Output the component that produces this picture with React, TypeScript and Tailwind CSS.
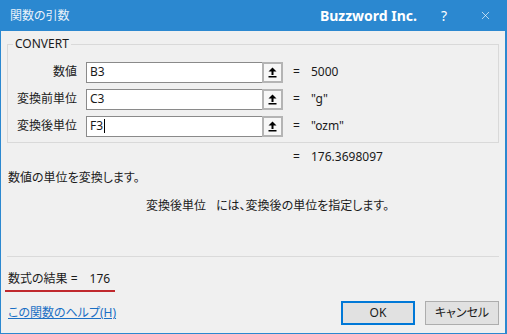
import { X } from "lucide-react";

// ── 参照ボタンの矢印 ─────────────────────────────────────────────
function RefArrow() {
  return (
    <svg width="9" height="11" viewBox="0 0 9 11">
      <path d="M4.5 0.5 L8.5 4.5 L5.5 4.5 L5.5 8 L3.5 8 L3.5 4.5 L0.5 4.5 Z" fill="#000" />
      <rect x="0.5" y="9" width="8" height="1.5" fill="#000" />
    </svg>
  );
}

const ARGS = [
  { label: "数値", value: "B3", result: "5000", caret: false },
  { label: "変換前単位", value: "C3", result: '"g"', caret: false },
  { label: "変換後単位", value: "F3", result: '"ozm"', caret: true },
];

export default function App() {
  return (
    <div className="w-[507px] h-[334px] bg-[#2b88d0] pl-[1px] pr-[2px] pb-[1px] flex flex-col text-[12px] text-[#1a1a1a] font-['Noto_Sans','Noto_Sans_CJK_JP',sans-serif] [font-feature-settings:'palt']">
      {/* ── タイトルバー ── */}
      <div className="h-[31px] flex items-center pl-[9px] pr-[13px] text-white shrink-0">
        <span className="text-[12px] text-[#eaf3fb]">関数の引数</span>
        <span className="ml-auto text-[14px] font-bold">Buzzword Inc.</span>
        <span className="ml-[20px] text-[14px] w-[14px] text-center">?</span>
        <X size={13} strokeWidth={1.2} className="ml-[28px]" />
      </div>

      {/* ── 本体 ── */}
      <div className="flex-1 bg-[#f0f0f0] px-[6px] flex flex-col">
        <fieldset className="mt-[6px] h-[106px] border border-[#d9d9d9] pl-[1px] pr-[6px]">
          <legend className="ml-[4px] px-[2px] leading-[14px] text-[12px]">CONVERT</legend>
          <div className="mt-[11px] flex flex-col gap-[7px]">
            {ARGS.map((a) => (
              <div key={a.label} className="flex items-center h-[20px]">
                <div className="w-[68px] text-right">{a.label}</div>
                <div className="ml-[9px] w-[177px] h-[21px] bg-white border border-[#8a8a8a] flex items-center pl-[3px]">
                  {a.value}
                  {a.caret && <span className="inline-block w-px h-[14px] bg-black ml-[1px]" />}
                </div>
                <div className="w-[21px] h-[21px] border-2 border-[#b4b4b4] bg-[#f7f7f7] flex items-center justify-center -ml-px">
                  <RefArrow />
                </div>
                <div className="ml-[10px] w-[18px]">=</div>
                <div>{a.result}</div>
              </div>
            ))}
          </div>
        </fieldset>

        <div className="mt-[5px] h-[17px] flex pl-[286px]">
          <span className="w-[18px]">=</span>
          <span>176.3698097</span>
        </div>
        <div className="mt-[4px] pl-[1px]">数値の単位を変換します。</div>
        <div className="mt-[10px] pl-[139px]">
          変換後単位<span className="ml-[10px]">には、変換後の単位を指定します。</span>
        </div>

        <div className="mt-[41px] h-px bg-[#dadada]" />

        <div className="mt-[13px] pl-[1px] flex">
          <div className="border-b-2 border-[#c0282d] pr-[5px] pb-[2px] -ml-[3px] pl-[3px]">
            数式の結果 =<span className="ml-[12px]">176</span>
          </div>
        </div>

        <div className="mt-[9px] flex items-center">
          <span className="text-[#1a6fc4] underline pl-[1px]">この関数のヘルプ(H)</span>
          <button className="ml-auto w-[74px] h-[24px] bg-[#e1e1e1] border-2 border-[#0078d7] text-[#1a1a1a]">OK</button>
          <button className="ml-[10px] w-[74px] h-[24px] bg-[#e1e1e1] border border-[#adadad] text-[#1a1a1a]">キャンセル</button>
        </div>
      </div>
    </div>
  );
}
